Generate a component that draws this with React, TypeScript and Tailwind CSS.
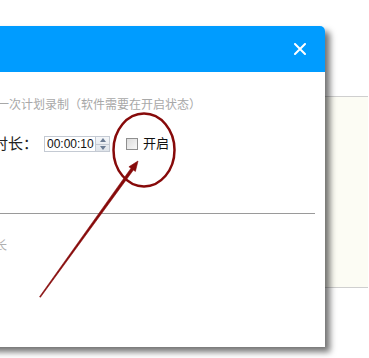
export default function App() {
  return (
    <div className="relative h-[358px] w-[369px] overflow-hidden bg-white font-['Liberation_Sans','Noto_Sans_CJK_SC',sans-serif]">
      {/* page behind the modal */}
      <div className="pt-[96px]">
        <div className="h-[192px] w-[368px] border-y border-[#cfcfcf] bg-[#fcfcf4]" />
      </div>

      {/* modal */}
      <div className="absolute left-[-100px] top-[26px] flex h-[321px] w-[425px] flex-col rounded-tr-[5px] bg-white shadow-[5px_5px_6px_rgba(0,0,0,0.55)]">
        <div className="flex h-[46px] items-center justify-end rounded-tr-[5px] bg-[#009cff] pr-[19px]">
          <svg width="12" height="12" viewBox="0 0 12 12" aria-hidden>
            <path d="M1 1L11 11M11 1L1 11" stroke="#fff" strokeWidth="2" strokeLinecap="round" />
          </svg>
        </div>

        <div className="flex flex-col">
          <p className="mt-[25px] ml-[97px] whitespace-nowrap text-[12px] leading-[16px] text-[#a8a8a8]">
            一次计划录制（软件需要在开启状态）
          </p>

          <div className="mt-[23px] ml-[93px] flex h-[16px] items-center">
            <span className="w-[51px] whitespace-nowrap text-[15px] leading-[16px] text-[#222]">时长：</span>
            <div className="flex h-[16px] items-stretch border border-[#c4cad3]">
              <span className="flex w-[50px] items-center pl-[2px] text-[12px] leading-none text-[#111]">00:00:10</span>
              <div className="flex w-[14px] flex-col border-l border-[#c4cad3] bg-gradient-to-b from-[#f4f6f9] to-[#dfe4ea]">
                <div className="flex flex-1 items-center justify-center border-b border-[#c4cad3]">
                  <svg width="6" height="4" viewBox="0 0 6 4"><path d="M0 4L3 0L6 4Z" fill="#6b7c93" /></svg>
                </div>
                <div className="flex flex-1 items-center justify-center">
                  <svg width="6" height="4" viewBox="0 0 6 4"><path d="M0 0L3 4L6 0Z" fill="#6b7c93" /></svg>
                </div>
              </div>
            </div>
            <div className="ml-[16px] h-[12px] w-[12px] border border-[#8f8f8f] bg-gradient-to-br from-[#dcdcdc] to-[#f8f8f8]" />
            <span className="ml-[5px] whitespace-nowrap text-[13px] leading-[16px] text-[#111]">开启</span>
          </div>

          <div className="mt-[61px] mr-[10px] h-px bg-[#9a9a9a]" />

          <p className="mt-[24px] ml-[95px] whitespace-nowrap text-[12px] leading-[16px] text-[#b0b0b0]">长</p>
        </div>
      </div>

      {/* red annotation */}
      <svg className="pointer-events-none absolute left-0 top-0" width="369" height="358" viewBox="0 0 369 358" aria-hidden>
        <ellipse cx="144" cy="150" rx="30.5" ry="36.5" fill="none" stroke="#870a0a" strokeWidth="2.5" />
        <polygon
          points="40.4,297.3 133.4,170.0 135.4,171.4 138,161 128.9,166.8 131.0,168.2 39.6,296.7"
          fill="#870a0a"
          stroke="#870a0a"
          strokeWidth="0.6"
          strokeLinejoin="round"
        />
      </svg>
    </div>
  );
}
